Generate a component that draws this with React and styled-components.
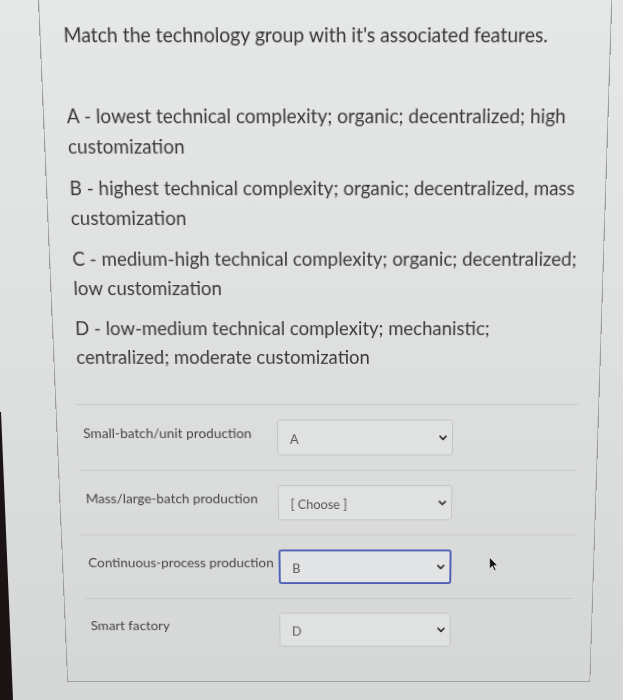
import React from "react";
import styled, { createGlobalStyle } from "styled-components";

const GlobalStyle = createGlobalStyle`
  html, body { margin: 0; padding: 0; }
  body {
    background: #dcdedd;
    font-family: Lato, "Open Sans", "Liberation Sans", sans-serif;
    color: #3a3a3a;
  }
`;

const Page = styled.div`
  position: relative;
  width: 623px;
  height: 700px;
  overflow: hidden;
  background: linear-gradient(180deg, #e6e8e8 0%, #dfe1e0 45%, #d5d7d6 100%);
  &::before {
    content: "";
    position: absolute;
    inset: 0;
    background: #1c1414;
    clip-path: polygon(0 412px, 1px 412px, 13px 700px, 0 700px);
    z-index: 3;
  }
`;

const Panel = styled.div`
  margin-left: 53px;
  width: 548px;
  box-sizing: border-box;
  border: 1px solid #9c9e9e;
  border-top: none;
  padding: 33px 22px 23px 22px;
  transform-origin: 50% 50%;
  transform: perspective(1000px) rotateX(-7.8deg) skewX(0.3deg);
`;

const Title = styled.h2`
  margin: 0;
  font-size: 18.6px;
  line-height: 24px;
  font-weight: 400;
  color: #343434;
`;

const Options = styled.div`
  margin-top: 50px;
  display: flex;
  flex-direction: column;
  gap: 11px;
`;

const Option = styled.p`
  margin: 0;
  font-size: 18.5px;
  line-height: 29px;
  color: #3a3a3a;
  max-width: 507px;
`;

const Rows = styled.div`
  margin-top: 33px;
  margin-left: -2px;
  margin-right: -2px;
`;

const Row = styled.div`
  display: flex;
  align-items: flex-start;
  border-top: 1px solid #c6c8c8;
  padding: 15px 0 15px 6px;
`;

const Label = styled.div`
  width: 196px;
  flex: none;
  padding-top: 6px;
  font-size: 13.8px;
  line-height: 16px;
  color: #454545;
  white-space: nowrap;
`;

const Select = styled.div`
  width: 178px;
  height: 37px;
  box-sizing: border-box;
  display: flex;
  align-items: center;
  justify-content: space-between;
  padding: 0 5px 0 12px;
  border: ${(p) => (p.$focused ? "2px solid #4c5fb4" : "1px solid #c3c5c5")};
  border-radius: 3px;
  background: ${(p) => (p.$focused ? "#e2e4e6" : "#e0e2e1")};
  font-size: 13px;
  color: #555;
`;

const Value = styled.span`
  padding-top: 2px;
`;

const Cursor = styled.svg`
  position: absolute;
  left: 489px;
  top: 557px;
  z-index: 4;
`;

const Chevron = () => (
  <svg width="8" height="6" viewBox="0 0 8 6">
    <path d="M1 1.2 L4 4.4 L7 1.2" fill="none" stroke="#333" strokeWidth="1.8" strokeLinecap="round" strokeLinejoin="round" />
  </svg>
);

const options = [
  "A - lowest technical complexity; organic; decentralized; high customization",
  "B - highest technical complexity; organic; decentralized, mass customization",
  "C - medium-high technical complexity; organic; decentralized; low customization",
  "D - low-medium technical complexity; mechanistic; centralized; moderate customization",
];

const rows = [
  { label: "Small-batch/unit production", value: "A" },
  { label: "Mass/large-batch production", value: "[ Choose ]" },
  { label: "Continuous-process production", value: "B", focused: true },
  { label: "Smart factory", value: "D" },
];

export default function App() {
  return (
    <>
      <GlobalStyle />
      <Page>
        <Panel>
          <Title>Match the technology group with it's associated features.</Title>
          <Options>
            {options.map((o) => (
              <Option key={o}>{o}</Option>
            ))}
          </Options>
          <Rows>
            {rows.map((r) => (
              <Row key={r.label}>
                <Label>{r.label}</Label>
                <Select $focused={r.focused}>
                  <Value>{r.value}</Value>
                  <Chevron />
                </Select>
              </Row>
            ))}
          </Rows>
        </Panel>
        <Cursor width="9" height="14" viewBox="0 0 11 18">
          <path d="M0.5 0.5 L0.5 15 L4 11.6 L6.6 17.5 L8.6 16.6 L6 10.8 L10.5 10.8 Z" fill="#111" stroke="#fff" strokeWidth="0.6" />
        </Cursor>
      </Page>
    </>
  );
}
